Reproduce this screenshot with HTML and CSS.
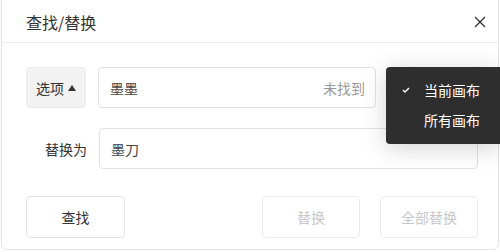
FILE: index.html
```html
<!DOCTYPE html>
<html lang="zh">
<head>
<meta charset="utf-8">
<link rel="stylesheet" href="styles.css">
</head>
<body>
<div class="dialog">
  <div class="header">
    <span class="title">查找/替换</span>
    <svg class="close" width="12" height="12" viewBox="0 0 12 12"><path d="M1 1L11 11M11 1L1 11" stroke="#333" stroke-width="1.4" fill="none"/></svg>
  </div>
  <div class="body">
    <div class="row">
      <div class="opt-btn">选项<span class="tri"></span></div>
      <div class="input find-input"><span class="val">墨墨</span><span class="status">未找到</span></div>
      <div class="menu">
        <div class="menu-item"><svg class="check" width="8" height="6" viewBox="0 0 8 6"><path d="M1 3L3 5L7 1" stroke="#fff" stroke-width="1.4" fill="none"/></svg><span>当前画布</span></div>
        <div class="menu-item"><span class="spacer"></span><span>所有画布</span></div>
      </div>
    </div>
    <div class="row row2">
      <label class="label">替换为</label>
      <div class="input replace-input"><span class="val">墨刀</span></div>
    </div>
    <div class="actions">
      <div class="btn">查找</div>
      <div class="right-btns">
        <div class="btn disabled">替换</div>
        <div class="btn disabled">全部替换</div>
      </div>
    </div>
  </div>
</div>
</body>
</html>
```
FILE: styles.css
```css
html, body {
  margin: 0;
  padding: 0;
  background: #fff;
}
body {
  font-family: "Noto Sans CJK SC", "Noto Sans", sans-serif;
  font-size: 14px;
  color: #333;
  width: 500px;
  height: 252px;
  overflow: hidden;
}
.dialog {
  margin-left: 1px;
  margin-top: -10px;
  width: 498px;
  height: 260px;
  box-sizing: border-box;
  border: 1px solid #e3e3e3;
  border-radius: 6px;
  background: #fff;
}
.header {
  height: 52px;
  box-sizing: border-box;
  padding: 10px 12px 0 24px;
  border-bottom: 1px solid #ebebeb;
  display: flex;
  align-items: center;
  justify-content: space-between;
}
.title {
  font-size: 16px;
  color: #333;
  line-height: 20px;
}
.close {
  display: block;
}
.body {
  padding: 24px 0 0 24px;
}
.row {
  position: relative;
  display: flex;
  gap: 12px;
  height: 41px;
}
.row2 {
  margin-top: 20px;
}
.opt-btn {
  width: 60px;
  box-sizing: border-box;
  background: #f2f2f2;
  border: 1px solid #ececec;
  border-radius: 4px;
  display: flex;
  align-items: center;
  justify-content: center;
  gap: 4px;
  color: #333;
}
.tri {
  width: 0;
  height: 0;
  border-left: 4.5px solid transparent;
  border-right: 4.5px solid transparent;
  border-bottom: 6px solid #333;
}
.input {
  box-sizing: border-box;
  border: 1px solid #e2e2e2;
  border-radius: 4px;
  display: flex;
  align-items: center;
  justify-content: space-between;
  padding: 0 10px 0 11px;
}
.find-input {
  width: 278px;
}
.replace-input {
  width: 379px;
}
.val {
  color: #444;
}
.status {
  color: #999;
}
.label {
  width: 61px;
  text-align: right;
  align-self: center;
  color: #333;
}
.menu {
  position: absolute;
  z-index: 10;
  left: 360px;
  top: 0;
  width: 114px;
  height: 77px;
  background: #2e2e2e;
  border-radius: 4px 0 0 4px;
  box-shadow: 0 4px 24px rgba(0,0,0,0.18);
  padding-top: 8px;
  box-sizing: border-box;
}
.menu-item {
  display: flex;
  align-items: center;
  height: 30px;
  padding-left: 16px;
  color: #fff;
  font-size: 14px;
}
.check, .spacer {
  display: block;
  width: 8px;
  margin-right: 14px;
}
.actions {
  display: flex;
  justify-content: space-between;
  margin-top: 27px;
  width: 452px;
}
.right-btns {
  display: flex;
  gap: 20px;
}
.btn {
  width: 99px;
  height: 42px;
  box-sizing: border-box;
  border: 1px solid #e4e4e4;
  border-radius: 4px;
  display: flex;
  align-items: center;
  justify-content: center;
  color: #333;
}
.btn.disabled {
  width: 98px;
  color: #c8c8c8;
  border-color: #ececec;
}
```
